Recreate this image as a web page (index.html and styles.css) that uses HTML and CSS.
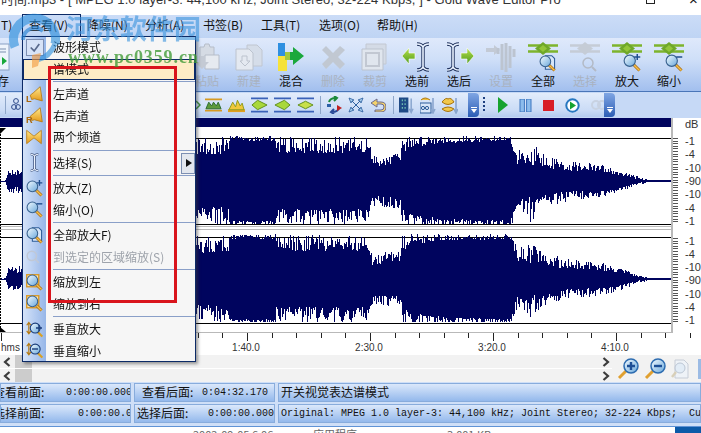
FILE: index.html
```html
<!DOCTYPE html>
<html lang="zh">
<head>
<meta charset="utf-8">
<title>Gold Wave Editor Pro</title>
<link rel="stylesheet" href="styles.css">
</head>
<body>
<svg class="defs" width="0" height="0">
  <defs>
    <linearGradient id="gGreen" x1="0" y1="0" x2="0" y2="1"><stop offset="0" stop-color="#b6e04a"/><stop offset="1" stop-color="#4f9a1e"/></linearGradient>
    <linearGradient id="gGlass" x1="0" y1="0" x2="1" y2="1"><stop offset="0" stop-color="#f4fbff"/><stop offset="1" stop-color="#69a8dc"/></linearGradient>
    <linearGradient id="gYellow" x1="0" y1="0" x2="0" y2="1"><stop offset="0" stop-color="#ffe88a"/><stop offset="1" stop-color="#e49a1c"/></linearGradient>
    <symbol id="ibeam" viewBox="0 0 16 30"><path d="M2 2c3 0 5 1 6 3 1-2 3-3 6-3M8 5v20M2 28c3 0 5-1 6-3 1 2 3 3 6 3" fill="none" stroke="#21335f" stroke-width="3.4"/><path d="M2 2c3 0 5 1 6 3 1-2 3-3 6-3M8 5v20M2 28c3 0 5-1 6-3 1 2 3 3 6 3" fill="none" stroke="#eaf3ff" stroke-width="1.6"/></symbol>
    <symbol id="lens" viewBox="0 0 24 24"><path d="M14 14l8 8" stroke="#a86a10" stroke-width="4"/><path d="M14 14l8 8" stroke="#f6c04a" stroke-width="2"/><circle cx="9" cy="9" r="7.5" fill="url(#gGlass)" stroke="#39628f" stroke-width="1.5"/></symbol>
    <symbol id="lensPlus" viewBox="0 0 24 24"><use href="#lens"/><path d="M15 4h8M19 0v8" stroke="#1f4f8f" stroke-width="2"/></symbol>
    <symbol id="lensMinus" viewBox="0 0 24 24"><use href="#lens"/><path d="M15 4h8" stroke="#1f4f8f" stroke-width="2"/></symbol>
    <symbol id="lensDoc" viewBox="0 0 24 24"><path d="M9 1h9l4 4v15H9z" fill="#d7e6f8" stroke="#2d5c99" stroke-width="1.5"/><use href="#lens"/></symbol>
    <symbol id="lensBox" viewBox="0 0 24 24"><rect x="1" y="1" width="17" height="17" fill="#fbe9b8" stroke="#d89a2a" stroke-width="2"/><use href="#lens"/></symbol>
    <symbol id="lensV" viewBox="0 0 24 24"><path d="M4 3v14M1 6l3-4 3 4M1 14l3 4 3-4" fill="none" stroke="#b5780e" stroke-width="1.6"/><path d="M16 15l7 7" stroke="#d9a022" stroke-width="3"/><circle cx="13" cy="10" r="7" fill="url(#gGlass)" stroke="#1b3d7a" stroke-width="1.5"/></symbol>
    <symbol id="speaker" viewBox="0 0 24 24"><path d="M6 13l5-4 9-8 3 20-11-3-4 1z" fill="url(#gYellow)" stroke="#b57a12" stroke-width="1.2"/></symbol>
    <symbol id="both" viewBox="0 0 24 24"><path d="M1 2l10 8 2 0 10-8v20l-10-8h-2l-10 8z" fill="url(#gYellow)" stroke="#b57a12" stroke-width="1.2"/></symbol>
    <symbol id="band" viewBox="0 0 30 14"><path d="M0 3.5h30M0 9.5h30" stroke="#7db42c" stroke-width="2.4"/><path d="M7 6.5L15 0l8 6.5L15 13z" fill="#6fa82a"/><path d="M11 6.5L15 3l4 3.5-4 3.5z" fill="#93c63a"/></symbol>
    <symbol id="lane" viewBox="0 0 18 16"><path d="M0 1h18M0 15h18" stroke="#3a62b8" stroke-width="2"/><path d="M1 8l6-5 10 5-10 5z" fill="#a9d83a" stroke="#5d8d1c"/></symbol>
    <symbol id="laneL" viewBox="0 0 18 16"><path d="M0 1h18M0 15h18" stroke="#3a62b8" stroke-width="2"/><path d="M17 8l-6-5L1 8l10 5z" fill="#a9d83a" stroke="#5d8d1c"/></symbol>
    <symbol id="laneC" viewBox="0 0 18 16"><path d="M0 1h18M0 15h18" stroke="#3a62b8" stroke-width="2"/><path d="M1 8l8-4 8 4-8 4z" fill="#c8e04a" stroke="#5d8d1c"/></symbol>
    <symbol id="mount" viewBox="0 0 18 16"><path d="M0 14h18" stroke="#e0a020" stroke-width="3"/><path d="M1 13l4-8 3 5 2-7 3 6 2-3 2 7z" fill="#f0c83a" stroke="#8a9a1c"/></symbol>
    <symbol id="mountG" viewBox="0 0 18 16"><path d="M0 2h18M0 14h18" stroke="#d69a22" stroke-width="2"/><path d="M1 12l3-7 3 4 2-4 3 4 2-4 3 7z" fill="#5d9a3a" stroke="#2c6a2c"/></symbol>
    <symbol id="eq" viewBox="0 0 16 18"><rect x="0" y="1" width="10" height="16" fill="#1f4a86"/><path d="M3 4h1M6 4h1M3 8h1M6 8h1M3 12h1M6 12h1" stroke="#8be0c0" stroke-width="2"/><path d="M13 2v14M11 13l2 4 2-4" fill="none" stroke="#8aa6cf" stroke-width="1.6"/></symbol>
    <symbol id="eqY" viewBox="0 0 16 18"><rect x="0" y="7" width="11" height="10" fill="#d8e6f8" stroke="#2d5c99"/><circle cx="3" cy="12" r="1.6" fill="none" stroke="#2d5c99"/><circle cx="7" cy="12" r="1.6" fill="none" stroke="#2d5c99"/><path d="M1 4q4-4 9 0" fill="#eebd3a" stroke="#b07a10"/><path d="M13 2v14M11 13l2 4 2-4" fill="none" stroke="#8aa6cf" stroke-width="1.6"/></symbol>
    <symbol id="lips" viewBox="0 0 16 18"><path d="M0 6q4-5 6-3 3-2 6 3-6 5-12 0zM0 13q6-4 12 0-6 5-12 0z" fill="#f2c84a" stroke="#a8730c"/><path d="M14 2v14M12 13l2 4 2-4" fill="none" stroke="#8aa6cf" stroke-width="1.6"/></symbol>
    <symbol id="chevL" viewBox="0 0 8 10"><path d="M6.5 1L2 5l4.500 4" fill="none" stroke="#3c3c3c" stroke-width="2.2"/></symbol>
    <symbol id="chevR" viewBox="0 0 8 10"><path d="M1.500 1L6 5 1.500 9" fill="none" stroke="#3c3c3c" stroke-width="2.2"/></symbol>
  </defs>
</svg>

<div class="window">
  <header class="titlebar">
    <span class="title">时间.mp3 - [ MPEG 1.0 layer-3: 44,100 kHz, Joint Stereo, 32-224 Kbps, ] - Gold Wave Editor Pro</span>
    <span class="win-max"></span>
    <span class="win-close">×</span>
  </header>

  <nav class="menubar">
    <span class="mi mi-cut">T)</span>
    <span class="mi mi-open">查看(V)</span>
    <span class="mi">降噪(N)</span>
    <span class="mi">分析(A)</span>
    <span class="mi">书签(B)</span>
    <span class="mi">工具(T)</span>
    <span class="mi">选项(O)</span>
    <span class="mi">帮助(H)</span>
  </nav>

  <div class="toolbar">
    <div class="tb tb-first">
      <svg class="ico" width="28" height="30" viewBox="0 0 28 30"><rect x="2" y="2" width="24" height="26" fill="#eef4fc" stroke="#8aa0c4"/><path d="M17 15l-5 4 5 4zM19 15l5 4-5 4z" fill="#18a83a"/><path d="M14 7h9M14 10h9" stroke="#7b8fb0"/></svg>
      <span>保存</span>
    </div>
    <div class="tb tb-off tb-gap">
      <svg class="ico" width="28" height="30" viewBox="0 0 28 30"><path d="M7 5h4l1-3h4l1 3h4v12H7z" fill="#d5dbe4" stroke="#b6bdc9"/><path d="M12 13h14v14H12z" fill="#e6eaf0" stroke="#b6bdc9"/><path d="M6 14h6v6h4l-7 7-7-7h4z" fill="#c4cad4"/></svg>
      <span>粘贴</span>
    </div>
    <div class="tb tb-off">
      <svg class="ico" width="30" height="30" viewBox="0 0 30 30"><path d="M13 3h10l5 5v16H13z" fill="#d5dde9" stroke="#c0c6d0"/><path d="M2 7h13l4 4v17H2z" fill="#e4e9f1" stroke="#bcc3ce"/><path d="M8 14h5v5h3l-5 5-5-5h2z" fill="none" stroke="#bcc3ce"/></svg>
      <span>新建</span>
    </div>
    <div class="tb">
      <svg class="ico" width="28" height="30" viewBox="0 0 28 30"><rect x="1" y="1" width="7" height="13" fill="#2e8fe0"/><path d="M1 14h9v15H1z" fill="#f6e23a"/><path d="M8 10h8V5l11 9-11 9v-5H8z" fill="#1aa83c"/><path d="M8 10h5v8H8z" fill="#a4c83a"/></svg>
      <span>混合</span>
    </div>
    <div class="tb tb-off">
      <svg class="ico" width="30" height="30" viewBox="0 0 30 30"><path d="M4 8l4-4 7 7 7-7 5 4-7 7 7 7-5 5-7-7-7 7-4-5 7-7z" fill="#c1c8d2"/></svg>
      <span>删除</span>
    </div>
    <div class="tb tb-off">
      <svg class="ico" width="30" height="30" viewBox="0 0 30 30"><path d="M6 2h20v20H6z" fill="#d4dbe6" stroke="#c2c8d2"/><path d="M2 7h21v21H2z" fill="#e0e6ee" stroke="#bcc3ce"/><rect x="6" y="11" width="13" height="13" fill="none" stroke="#c2c8d2" stroke-width="2"/></svg>
      <span>裁剪</span>
    </div>
    <div class="tb">
      <svg class="ico" width="30" height="30" viewBox="0 0 30 30"><use href="#ibeam" x="13" width="16" height="30"/><path d="M13 11H7V6l-7 8 7 8v-5h6z" fill="url(#gGreen)" stroke="#fff" stroke-width=".6"/></svg>
      <span>选前</span>
    </div>
    <div class="tb">
      <svg class="ico" width="30" height="30" viewBox="0 0 30 30"><use href="#ibeam" x="1" width="16" height="30"/><path d="M17 11h6V6l7 8-7 8v-5h-6z" fill="url(#gGreen)" stroke="#fff" stroke-width=".6"/></svg>
      <span>选后</span>
    </div>
    <div class="tb tb-off">
      <svg class="ico" width="30" height="30" viewBox="0 0 30 30"><path d="M0 6h8V3l6 5-6 5v-3H0z" fill="#c3cad5"/><path d="M12 12V6M16 16V2M20 20V1M24 22V4M28 15V7M16 28V14M20 30V14M24 26V14" stroke="#bcc4d0" stroke-width="3"/></svg>
      <span>设置</span>
    </div>
    <div class="tb">
      <svg class="ico" width="30" height="30" viewBox="0 0 30 30"><use href="#band" width="30" height="14"/><use href="#lensDoc" x="11" y="13" width="17" height="17"/></svg>
      <span>全部</span>
    </div>
    <div class="tb tb-off">
      <svg class="ico" width="30" height="30" viewBox="0 0 30 30"><path d="M0 3.5h30M0 9.5h30" stroke="#c5ccd6" stroke-width="2.4"/><path d="M7 6.5L15 0l8 6.5L15 13z" fill="#c5ccd6"/><circle cx="18" cy="21" r="5" fill="none" stroke="#b3bac6" stroke-width="1.5"/><path d="M22 25l4 4" stroke="#b3bac6" stroke-width="2"/></svg>
      <span>选择</span>
    </div>
    <div class="tb">
      <svg class="ico" width="30" height="30" viewBox="0 0 30 30"><use href="#band" width="30" height="14"/><use href="#lensPlus" x="11" y="12" width="18" height="18"/></svg>
      <span>放大</span>
    </div>
    <div class="tb">
      <svg class="ico" width="30" height="30" viewBox="0 0 30 30"><use href="#band" width="30" height="14"/><use href="#lensMinus" x="11" y="12" width="18" height="18"/></svg>
      <span>缩小</span>
    </div>
  </div>

  <div class="bands">
    <div class="band band-a">
      <i class="sep"></i>
      <svg class="tool" width="10" height="14" viewBox="0 0 10 14"><circle cx="5" cy="3" r="2.400" fill="none" stroke="#2d4a8a"/><circle cx="3" cy="9" r="2.400" fill="none" stroke="#2d4a8a"/><circle cx="7" cy="9" r="2.400" fill="none" stroke="#2d4a8a"/></svg>
      <svg class="tool t-mark" width="5" height="16" viewBox="0 0 5 16"><path d="M0 4l4 4-4 4" fill="none" stroke="#3a8a3a" stroke-width="1.5"/></svg>
      <svg class="tool" width="17" height="16"><use href="#mountG"/></svg>
      <svg class="tool" width="17" height="16"><use href="#mount"/></svg>
      <svg class="tool" width="17" height="16"><use href="#lane"/></svg>
      <svg class="tool" width="17" height="16"><use href="#laneL"/></svg>
      <svg class="tool" width="17" height="16"><use href="#laneC"/></svg>
      <i class="sep"></i>
      <svg class="tool" width="16" height="18" viewBox="0 0 16 18"><path d="M3 6q1-4 7-4M8 0l3 2-3 3" fill="none" stroke="#1c8a3a" stroke-width="2"/><path d="M13 12q-1 4-7 4M8 18l-3-2 3-3" fill="none" stroke="#2a4a98" stroke-width="2"/><path d="M11 9l5 3-5 3z" fill="#c02020"/><path d="M1 8h4v3H1z" fill="#2a60a8"/></svg>
      <svg class="tool" width="16" height="16" viewBox="0 0 16 16"><path d="M1 1l5 2-2 1 8 8 1-2 2 5-5-2 2-1-8-8-1 2zM15 1l-5 2 2 1-8 8-1-2-2 5 5-2-2-1 8-8 1 2z" fill="#a8d0f0" stroke="#2a5c9c" stroke-width=".8"/></svg>
      <svg class="tool" width="16" height="14" viewBox="0 0 16 14"><path d="M7 1L1 5l6 4V6h4q3 0 3 3t-3 3H5v2h6q5 0 5-5t-5-5H7z" fill="#f3d26a" stroke="#6c6a8c"/></svg>
      <i class="sep sep-b"></i>
      <svg class="tool" width="15" height="18"><use href="#eq"/></svg>
      <svg class="tool" width="16" height="18"><use href="#eqY"/></svg>
      <svg class="tool" width="16" height="18"><use href="#lips"/></svg>
      <span class="chev"></span>
    </div>
    <div class="band band-b">
      <i class="grip"></i>
      <svg class="tool" width="10" height="16" viewBox="0 0 10 16"><path d="M0 0l10 8-10 8z" fill="#16a32e"/></svg>
      <svg class="tool" width="13" height="13" viewBox="0 0 13 13"><rect x="1" y="0" width="4.400" height="13" fill="#8cbcec" stroke="#3d77c0"/><rect x="7.600" y="0" width="4.400" height="13" fill="#8cbcec" stroke="#3d77c0"/></svg>
      <svg class="tool" width="11" height="11" viewBox="0 0 11 11"><rect width="11" height="11" fill="#d81e26"/></svg>
      <svg class="tool" width="15" height="15" viewBox="0 0 15 15"><circle cx="7.500" cy="7.500" r="6.200" fill="#fff" stroke="#2878c0" stroke-width="2"/><path d="M5 3.500l6 4-6 4z" fill="#16a32e"/></svg>
      <svg class="tool" width="16" height="12" viewBox="0 0 16 12"><circle cx="5" cy="6" r="4" fill="none" stroke="#c8d2e2" stroke-width="2"/><circle cx="11" cy="6" r="4" fill="none" stroke="#c8d2e2" stroke-width="2"/></svg>
      <span class="chev"></span>
    </div>
  </div>

  <div class="wave-row">
    <div class="wave-col">
      <div class="navy"></div>
      <canvas id="wave" width="671" height="206"></canvas>
    </div>
    <aside class="db">
      <div class="db-head">dB</div>
      <div class="db-ch"><span>-1</span><span>-4</span><span>-10</span><span>-90</span><span>-10</span><span>-4</span><span>-1</span></div>
      <div class="db-ch db-ch2"><span>-1</span><span>-4</span><span>-10</span><span>-90</span><span>-10</span><span>-4</span><span>-1</span></div>
    </aside>
  </div>

  <div class="ruler">
    <span class="hms">hms</span>
    <span class="rl">1:40.0</span>
    <span class="rl">2:30.0</span>
    <span class="rl">3:20.0</span>
    <span class="rl">4:10.0</span>
  </div>

  <div class="scrolls">
    <div class="bars">
      <div class="bar"><svg class="chv" width="8" height="10"><use href="#chevL"/></svg><i class="thumb"></i><svg class="chv chv-r" width="8" height="10"><use href="#chevR"/></svg></div>
      <div class="bar"><svg class="chv" width="8" height="10"><use href="#chevL"/></svg><i class="thumb"></i><svg class="chv chv-r" width="8" height="10"><use href="#chevR"/></svg></div>
    </div>
    <svg class="zb" width="22" height="22"><path d="M9 13L2 20" stroke="#e0a030" stroke-width="3"/><circle cx="14" cy="8" r="7" fill="url(#gGlass)" stroke="#2d6cb0" stroke-width="1.5"/><path d="M10 8h8M14 4v8" stroke="#1d4f96" stroke-width="2.4"/></svg>
    <svg class="zb" width="22" height="22"><path d="M9 13L2 20" stroke="#e0a030" stroke-width="3"/><circle cx="14" cy="8" r="7" fill="url(#gGlass)" stroke="#2d6cb0" stroke-width="1.5"/><path d="M10 8h8" stroke="#1d4f96" stroke-width="2.4"/></svg>
    <svg class="zb zb-off" width="18" height="20"><path d="M4 1h9l4 4v14H4z" fill="#eef2f7" stroke="#c6ccd6"/><circle cx="9" cy="9" r="5" fill="#e2ecf6" stroke="#bcc6d4"/><path d="M5 13l-4 5" stroke="#d8cfb8" stroke-width="2.4"/></svg>
    <i class="zb-edge"></i>
  </div>

  <div class="stat-row">
    <div class="cell c1"><span class="lb lb-a">查看前面:</span><span class="val">0:00:00.000</span></div>
    <div class="cell c2"><span class="lb lb-b">查看后面:</span><span class="val">0:04:32.170</span></div>
    <div class="cell c3"><span class="lb">开关视觉表达谱模式</span></div>
  </div>
  <div class="stat-row stat-row2">
    <div class="cell c1"><span class="lb lb-c">选择前面:</span><span class="val">0:00:00.000</span></div>
    <div class="cell c2"><span class="lb lb-d">选择后面:</span><span class="val">0:00:00.000</span></div>
    <div class="cell c3"><span class="val val-long">Original: MPEG 1.0 layer-3: 44,100 kHz; Joint Stereo; 32-224 Kbps;  Cu</span></div>
  </div>

  <footer class="explorer">
    <span class="ex-date">2002-09-05 6:06</span>
    <span class="ex-type">应用程序</span>
    <span class="ex-size">3,001 KB</span>
    <i class="ex-blue"></i>
  </footer>

  <div class="menu">
    <div class="item"><span class="rail-ico checkbox"><svg width="14" height="12" viewBox="0 0 14 12"><path d="M2 6l4 4 6-8" fill="none" stroke="#5a6a8c" stroke-width="2"/></svg></span>波形模式</div>
    <div class="item active"><span class="rail-ico"></span>谱模式</div>
    <div class="msep"></div>
    <div class="item"><span class="rail-ico"><svg width="17" height="17" viewBox="0 0 24 24"><use href="#speaker"/><text x="0" y="22" class="spk-letter">L</text></svg></span>左声道</div>
    <div class="item"><span class="rail-ico"><svg width="17" height="17" viewBox="0 0 24 24"><use href="#speaker"/><text x="0" y="22" class="spk-letter">R</text></svg></span>右声道</div>
    <div class="item"><span class="rail-ico"><svg width="16" height="16"><use href="#both"/></svg></span>两个频道</div>
    <div class="msep"></div>
    <div class="item"><span class="rail-ico rail-i"><svg width="11" height="19"><use href="#ibeam"/></svg></span>选择(S)<span class="sub"></span></div>
    <div class="msep"></div>
    <div class="item"><span class="rail-ico"><svg width="17" height="17"><use href="#lensPlus"/></svg></span>放大(Z)</div>
    <div class="item"><span class="rail-ico"><svg width="17" height="17"><use href="#lensMinus"/></svg></span>缩小(O)</div>
    <div class="msep"></div>
    <div class="item"><span class="rail-ico"><svg width="17" height="17"><use href="#lensDoc"/></svg></span>全部放大F)</div>
    <div class="item off"><span class="rail-ico"><svg width="14" height="14" viewBox="0 0 24 24"><circle cx="10" cy="10" r="8" fill="none" stroke="#c0c8d6" stroke-width="2.500"/><path d="M15 15l7 7" stroke="#c0c8d6" stroke-width="3"/></svg></span>到选定的区域缩放(S)</div>
    <div class="msep"></div>
    <div class="item"><span class="rail-ico"><svg width="17" height="17"><use href="#lensBox"/></svg></span>缩放到左</div>
    <div class="item"><span class="rail-ico"><svg width="17" height="17"><use href="#lensBox"/></svg></span>缩放到右</div>
    <div class="msep"></div>
    <div class="item"><span class="rail-ico"><svg width="17" height="17"><use href="#lensV"/><path d="M10 7h6M13 4v6" stroke="#1b3d7a" stroke-width="1.4"/></svg></span>垂直放大</div>
    <div class="item"><span class="rail-ico"><svg width="17" height="17"><use href="#lensV"/><path d="M6 7h6" stroke="#1b3d7a" stroke-width="1.4"/></svg></span>垂直缩小</div>
  </div>

  <div class="redbox"></div>

  <div class="mark">
    <svg class="mark-logo" width="58" height="58" viewBox="0 0 58 58"><path d="M7 34A21 21 0 1 1 47 31" fill="none" stroke="#2b8fdc" stroke-width="9"/><path d="M47 31Q42 44 29 47" fill="none" stroke="#2b8fdc" stroke-width="5"/><path d="M15 27a12 12 0 0 1 20-9" fill="none" stroke="#1f7fd0" stroke-width="4"/><path d="M24 42l9-2-3 13-6 2z" fill="#f29a3e"/></svg>
    <div class="mark-name">河东软件园</div>
    <div class="mark-url">www.pc0359.cn</div>
  </div>
</div>
<script src="script.js"></script>
</body>
</html>
```

FILE: styles.css
```css
* { box-sizing: border-box; }
html, body { margin: 0; padding: 0; }
body {
  width: 701px;
  height: 433px;
  overflow: hidden;
  background: #fff;
  color: #111;
  font: 12px/1.2 "Noto Sans CJK SC", "Liberation Sans", sans-serif;
}
.defs { position: absolute; }
.window { position: relative; width: 701px; height: 433px; overflow: hidden; display: flex; flex-direction: column; }

.titlebar { height: 15px; flex: none; display: flex; background: #fff; overflow: hidden; }
.title { flex: 1; margin-top: -8px; padding-left: 1px; font: 13px/15px "Liberation Sans", "Noto Sans CJK SC", sans-serif; letter-spacing: .05px; color: #333; white-space: nowrap; }
.win-max { width: 9px; height: 4px; margin-right: 34px; border: 1px solid #222; border-top: 0; }
.win-close { width: 12px; margin-top: -8px; font: 15px/15px "Liberation Sans", sans-serif; }

.menubar { height: 23px; flex: none; display: flex; align-items: center; padding-bottom: 2px; background: linear-gradient(#cbdcf7, #bfd4f4); font-size: 12px; }
.mi { width: 58px; white-space: nowrap; }
.mi-cut { width: 29px; padding-left: 1px; }
.mi-open { position: relative; }
.mi-open::before { content: ""; position: absolute; left: -7px; top: -4px; width: 57px; height: 22px; border: 1px solid #0c2a66; border-bottom: 0; }

.toolbar { height: 54px; flex: none; display: flex; background: linear-gradient(#dfe9fb, #cfdff8 40%, #a2bfee); border-bottom: 1px solid #4a76b8; overflow: hidden; }
.tb { width: 42px; flex: none; display: flex; flex-direction: column; align-items: center; padding-top: 4px; }
.tb span { margin-top: 1px; line-height: 16px; }
.tb-first { margin-left: -24px; }
.tb-gap { margin-left: 168px; }
.tb-off span { color: #a9b2c0; }
.ico { display: block; flex: none; }

.bands { height: 26px; flex: none; display: flex; background: #c6d9f6; padding-top: 1px; }
.band { display: flex; align-items: center; height: 24px; background: linear-gradient(#e2ecfb, #cbdcf6 70%, #b4cbef); border-radius: 0 4px 4px 0; gap: 6px; position: relative; }
.band-a { width: 479px; padding-left: 5px; }
.band-b { width: 136px; padding-left: 4px; border-radius: 4px; gap: 11px; }
.tool { flex: none; display: block; }
.t-mark { margin-left: 169px; margin-right: -2px; }
.sep { width: 1px; height: 18px; margin-right: -1px; background: #8ea6c9; flex: none; }
.sep-b { margin-left: 1px; }
.grip { width: 2px; height: 16px; margin-right: 2px; background: repeating-linear-gradient(#1d3f80 0 2px, transparent 2px 4px); flex: none; }
.chev { position: absolute; right: 0; top: 0; bottom: 0; width: 11px; border-radius: 0 4px 4px 0; background: linear-gradient(#7fa6e4, #2b5cb4); }
.chev::after { content: ""; position: absolute; left: 3px; bottom: 4px; width: 0; height: 0; border: 3px solid transparent; border-top: 4px solid #fff; border-bottom: 0; }
.chev::before { content: ""; position: absolute; left: 3px; bottom: 9px; width: 6px; height: 1px; background: #fff; }

.wave-row { height: 215px; flex: none; display: flex; }
.wave-col { width: 671px; flex: none; display: flex; flex-direction: column; }
.navy { height: 9px; background: #00045e; flex: none; }
canvas { display: block; width: 671px; height: 206px; }
.db { flex: 1; border-left: 2px solid #b9b9b9; height: 215px; font: 11px/12px "Liberation Sans", sans-serif; color: #333; background: #fff; }
.db-head { height: 17px; padding-left: 12px; padding-top: 1px; line-height: 10px; }
.db-ch { height: 92px; display: flex; flex-direction: column; justify-content: space-between; align-items: flex-start; padding-left: 12px; background:
  repeating-linear-gradient(#555 0 1px, transparent 1px 2.6px) 0 3px / 5px 86px no-repeat; }
.db-ch2 { height: 91px; margin-top: 8px; }
.db-ch span { line-height: 12px; }
.spk-letter { font: bold 13px "Liberation Sans", sans-serif; fill: #a8660c; }

.ruler { height: 22px; flex: none; display: flex; align-items: flex-end; font: 10px/14px "Liberation Sans", sans-serif; color: #333; background:
  repeating-linear-gradient(90deg, #222 0 1px, transparent 1px 123px) .5px 0 / 100% 8px no-repeat,
  repeating-linear-gradient(90deg, #222 0 1px, transparent 1px 24.6px) .5px 0 / 100% 5px no-repeat, #fff; }
.hms { width: 184.5px; padding-left: 1px; }
.rl { width: 123px; text-align: center; }

.scrolls { height: 27px; flex: none; display: flex; align-items: center; background: #f2f2f2; }
.bars { width: 612px; flex: none; align-self: stretch; display: flex; flex-direction: column; }
.bar { height: 14px; flex: none; display: flex; align-items: center; border-bottom: 1px solid #fff; }
.bar + .bar { height: 13px; border-bottom: 0; }
.chv { flex: none; margin-left: 3px; margin-right: 4px; display: block; }
.chv-r { margin-left: auto; margin-right: 2px; }
.thumb { width: 17px; height: 100%; flex: none; background: #cccccc; }
.zb { flex: none; margin-left: 5px; }
.zb-edge { width: 3px; height: 20px; margin-left: auto; background: #9cbbe4; }

.stat-row { height: 21px; flex: none; display: flex; gap: 3px; background: #cfdff7; padding: 1px 0; }
.stat-row2 { height: 24px; padding-bottom: 3px; border-bottom: 1px solid #5f93d6; }
.cell { height: 100%; display: flex; align-items: center; overflow: hidden; white-space: nowrap; border: 1px solid #88acdc; background: linear-gradient(#dbe8fb, #94b9ec); }
.c1 { width: 131px; }
.c2 { width: 141px; }
.c3 { flex: 1; padding-left: 2px; }
.lb { flex: none; font-size: 12px; }
.val { font: 10px/14px "Liberation Mono", monospace; color: #111; flex: none; }
.lb-a { width: 73px; margin-left: -8px; }
.lb-b { width: 60px; margin-left: 7px; }
.lb-c { width: 85px; margin-left: -8px; }
.lb-d { width: 71px; margin-left: 2px; }
.val-long { white-space: pre; }

.explorer { flex: 1; display: flex; background: #fff; font-size: 11px; line-height: 14px; color: #666; overflow: hidden; }
.ex-date { margin-left: 193px; width: 120px; }
.ex-type { width: 134px; }
.ex-size { width: 228px; }
.ex-blue { flex: 1; background: #0c5aa8; }

.menu { position: absolute; left: 22px; top: 36px; width: 174px; height: 326px; border: 1px solid #0c2a66; box-shadow: 2px 2px 3px rgba(60,60,60,.5); background: linear-gradient(90deg, #d5e3f9 0, #96b6e8 23px, #f6f6f6 23px); }
.item { height: 21.5px; padding-bottom: 1px; display: flex; align-items: center; white-space: nowrap; position: relative; font-size: 12px; }
.item.active { background: #fdecc6; outline: 1px solid #0c2a66; outline-offset: -1px; }
.item.off { color: #9ea3ab; }
.rail-ico { width: 30px; flex: none; padding-left: 3px; display: flex; align-items: center; height: 100%; }
.rail-i { padding-left: 6px; }
.checkbox svg { width: 18px; height: 17px; padding: 2px; border: 1px solid #7d8fb2; background: #d7e3f7; }
.msep { height: 4px; margin-left: 30px; background: linear-gradient(transparent 1.5px, #8a9fc8 1.5px, #8a9fc8 2.5px, transparent 2.5px); }
.sub { position: absolute; right: 0; top: 0; width: 14px; height: 21px; background: #e3e7ee; border: 1px solid #7d8fb2; }
.sub::after { content: ""; position: absolute; left: 4px; top: 5px; border: 4px solid transparent; border-left: 6px solid #111; border-right: 0; }

.redbox { position: absolute; left: 48px; top: 66px; width: 129px; height: 237px; border: 3px solid #d9141c; pointer-events: none; }

.mark { position: absolute; left: 8px; top: 13px; width: 200px; height: 58px; pointer-events: none; }
.mark-logo { position: absolute; left: 0; top: 0; opacity: .62; }
.mark-name { position: absolute; left: 58px; top: 0; font: bold 27px/30px "Noto Sans CJK SC", sans-serif; color: #3d95de; opacity: .62; white-space: nowrap; }
.mark-url { position: absolute; left: 60px; top: 34px; font: bold 18px/20px "Liberation Serif", serif; letter-spacing: .9px; color: #3f9a35; opacity: .78; white-space: nowrap; }
```

FILE: script.js
```js
(function () {
  var cv = document.getElementById('wave');
  var g = cv.getContext('2d');
  var W = 671;
  // x, guaranteed amplitude, peak amplitude of the loudness envelope (px)
  var env = [
    [0, 0, 0.5], [5, 0.5, 1], [8, 6, 12], [22, 6, 13], [60, 25, 35], [190, 24, 42],
    [196, 26, 44], [228, 26, 44], [229, 40, 45], [275, 40, 45], [276, 28, 44], [368, 28, 44],
    [372, 14, 26], [400, 18, 28], [402, 28, 44], [412, 34, 45], [440, 38, 45], [510, 40, 45],
    [513, 30, 40], [517, 16, 30], [526, 18, 34], [530, 16, 42], [540, 15, 30], [552, 12, 24],
    [570, 10, 20], [600, 9, 17], [620, 6, 11], [636, 2, 5], [650, 0.5, 1], [671, 0.5, 0.5]
  ];
  var seed = 7;
  function rnd() { seed = (seed * 1664525 + 1013904223) >>> 0; return seed / 4294967296; }
  function at(x) {
    for (var i = 1; i < env.length; i++) {
      if (x <= env[i][0]) {
        var a = env[i - 1], b = env[i], t = (x - a[0]) / ((b[0] - a[0]) || 1);
        return [a[1] + (b[1] - a[1]) * t, a[2] + (b[2] - a[2]) * t];
      }
    }
    return [0.5, 0.5];
  }
  function channel(mid, top, bottom) {
    g.fillStyle = '#000';
    g.fillRect(0, top, W, 1);
    g.fillRect(0, bottom, W, 1);
    g.fillStyle = '#00045e';
    g.fillRect(0, mid, W, 1);
    for (var x = 0; x < W; x++) {
      var e = at(x);
      var u = e[0] + (e[1] - e[0]) * Math.pow(rnd(), 1.2);
      var d = e[0] + (e[1] - e[0]) * Math.pow(rnd(), 1.2);
      g.fillRect(x, Math.round(mid - u), 1, Math.round(u + Math.min(d, 43)));
    }
  }
  g.fillStyle = '#fff';
  g.fillRect(0, 0, W, 206);
  channel(54, 11, 97);
  channel(152, 110, 196);
  g.fillStyle = '#b9b9b9';
  g.fillRect(0, 99, W, 1);
  g.fillRect(0, 102, W, 1);
  g.fillRect(0, 205, W, 1);
  g.fillStyle = '#000';
  for (var y = 1; y < 205; y += 3) g.fillRect(0, y, 1, 2);
  g.beginPath(); g.moveTo(0, 1); g.lineTo(6, 1); g.lineTo(0, 7); g.fill();
  g.beginPath(); g.moveTo(0, 200); g.lineTo(6, 205); g.lineTo(0, 205); g.fill();
})();
```
